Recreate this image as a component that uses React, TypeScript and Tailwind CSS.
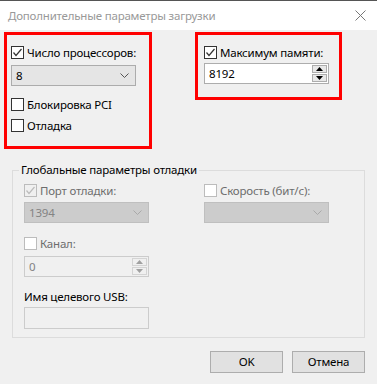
import React from "react";

const Check = ({ color }: { color: string }) => (
  <svg width="11" height="11" viewBox="0 0 11 11" className="block">
    <polyline points="1.5,5.5 4,8.5 9.5,2" fill="none" stroke={color} strokeWidth="1.2" />
  </svg>
);

const CheckBox = ({
  checked,
  label,
  disabled,
  dim,
}: {
  checked?: boolean;
  label: string;
  disabled?: boolean;
  dim?: boolean;
}) => (
  <div className="flex items-center h-[13px] gap-[3px]">
    <div
      className={
        "w-[13px] h-[13px] border flex items-center justify-center shrink-0 " +
        (disabled ? "border-[#bcbcbc] bg-[#f0f0f0]" : dim ? "border-[#bcbcbc] bg-white" : "border-[#333333] bg-white")
      }
    >
      {checked && <Check color={disabled ? "#bcbcbc" : "#333333"} />}
    </div>
    <span className={"leading-[16px] whitespace-nowrap " + (disabled || dim ? "text-[#6d6d6d]" : "text-black")}>
      {label}
    </span>
  </div>
);

const Chevron = ({ color }: { color: string }) => (
  <svg width="9" height="5" viewBox="0 0 9 5" className="block">
    <polyline points="0.5,0.5 4.5,4.5 8.5,0.5" fill="none" stroke={color} strokeWidth="1" />
  </svg>
);

const Combo = ({ value, disabled }: { value: string; disabled?: boolean }) => (
  <div
    className={
      "w-[125px] h-[21px] border flex items-center justify-between pl-[4px] pr-[6px] " +
      (disabled ? "bg-[#cccccc] border-[#bfbfbf] text-[#838383]" : "bg-[#e5e5e5] border-[#acacac] text-black")
    }
  >
    <span className="leading-[16px]">{value}</span>
    <Chevron color={disabled ? "#a9a9a9" : "#555555"} />
  </div>
);

const Tri = ({ up, color }: { up?: boolean; color: string }) => (
  <svg width="7" height="4" viewBox="0 0 7 4" className="block">
    <polygon points={up ? "3.5,0 7,4 0,4" : "0,0 7,0 3.5,4"} fill={color} />
  </svg>
);

const Spin = ({ value, disabled }: { value: string; disabled?: boolean }) => (
  <div
    className={
      "w-[125px] h-[21px] border flex items-center justify-between pl-[4px] pr-[1px] " +
      (disabled ? "bg-[#f0f0f0] border-[#cccccc] text-[#838383]" : "bg-white border-[#adadad] text-black")
    }
  >
    <span className="leading-[16px]">{value}</span>
    <div className="flex flex-col gap-[1px]">
      {[true, false].map((up) => (
        <div
          key={String(up)}
          className={
            "w-[15px] h-[8px] border flex items-center justify-center " +
            (disabled ? "border-[#d4d4d4] bg-[#f0f0f0]" : "border-[#adadad] bg-[#e8e8e8]")
          }
        >
          <Tri up={up} color={disabled ? "#a0a0a0" : "#000000"} />
        </div>
      ))}
    </div>
  </div>
);

export default function App() {
  return (
    <div
      className="w-[377px] h-[384px] bg-[#f0f0f0] flex flex-col text-[11.5px] tracking-[-0.2px] text-black"
      style={{ fontFamily: '"Segoe UI", "Noto Sans", sans-serif' }}
    >
      <div className="h-[30px] bg-white border-t border-[#555555] flex items-center justify-between pl-[8px] pr-[11px]">
        <span className="text-[#999999] leading-[16px]">Дополнительные параметры загрузки</span>
        <svg width="11" height="11" viewBox="0 0 11 11" className="block">
          <path d="M0.5 0.5 L10.5 10.5 M10.5 0.5 L0.5 10.5" stroke="#777777" strokeWidth="1" />
        </svg>
      </div>

      <div className="flex pl-[4px] pt-[2px]">
        <div className="w-[148px] h-[117px] border-[3px] border-[#ff0000] pl-[4px] pt-[11px] flex flex-col">
          <CheckBox checked label="Число процессоров:" />
          <div className="mt-[6px]">
            <Combo value="8" />
          </div>
          <div className="mt-[12px]">
            <CheckBox label="Блокировка PCI" />
          </div>
          <div className="mt-[8px]">
            <CheckBox label="Отладка" />
          </div>
        </div>
        <div className="ml-[43px] w-[147px] h-[68px] border-[3px] border-[#ff0000] pl-[6px] pt-[11px] flex flex-col">
          <CheckBox checked label="Максимум памяти:" />
          <div className="mt-[4px]">
            <Spin value="8192" />
          </div>
        </div>
      </div>

      <div className="relative mx-[12px] mt-[21px] h-[168px] border border-[#dcdcdc] pl-[11px] pt-[13px] flex gap-[55px]">
        <span className="absolute left-[6px] -top-[9px] px-[2px] bg-[#f0f0f0] leading-[16px]">
          Глобальные параметры отладки
        </span>
        <div className="flex flex-col">
          <CheckBox checked disabled label="Порт отладки:" />
          <div className="mt-[5px]">
            <Combo value="1394" disabled />
          </div>
          <div className="mt-[14px]">
            <CheckBox dim label="Канал:" />
          </div>
          <div className="mt-[6px]">
            <Spin value="0" disabled />
          </div>
          <span className="mt-[12px] leading-[16px]">Имя целевого USB:</span>
          <div className="mt-[2px] w-[125px] h-[22px] border border-[#cccccc] bg-[#f0f0f0]" />
        </div>
        <div className="flex flex-col">
          <CheckBox dim label="Скорость (бит/с):" />
          <div className="mt-[5px]">
            <Combo value="" disabled />
          </div>
        </div>
      </div>

      <div className="flex justify-end gap-[9px] pr-[12px] mt-[13px]">
        <button className="w-[73px] h-[22px] bg-[#e1e1e1] border border-[#adadad] leading-[16px]">OK</button>
        <button className="w-[73px] h-[22px] bg-[#e1e1e1] border border-[#adadad] leading-[16px]">Отмена</button>
      </div>
    </div>
  );
}
